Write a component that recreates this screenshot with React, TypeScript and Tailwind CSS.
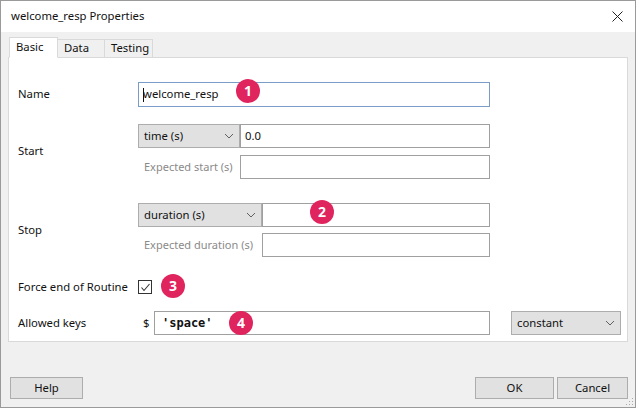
import React from "react";

const font = { fontFamily: '"Noto Sans", "Open Sans", sans-serif' };

function Chevron() {
  return (
    <svg width="10" height="6" viewBox="0 0 10 6" className="shrink-0">
      <polyline points="1,1 5,5 9,1" fill="none" stroke="#606060" strokeWidth="1" />
    </svg>
  );
}

function Badge({ n, className }: { n: string; className: string }) {
  return (
    <div
      className={`absolute w-[24px] h-[24px] rounded-full bg-[#e0245e] text-white flex items-center justify-center text-[14px] font-bold leading-none ${className}`}
    >
      {n}
    </div>
  );
}

function Select({ w, label }: { w: string; label: string }) {
  return (
    <div
      className={`${w} h-[24px] bg-[#e1e1e1] border border-[#adadad] flex items-center justify-between pl-[5px] pr-[5px] text-[11.3px] text-[#111]`}
    >
      <span>{label}</span>
      <Chevron />
    </div>
  );
}

export default function App() {
  return (
    <div className="w-[639px] h-[409px] bg-white" style={font}>
      <div className="w-[636px] h-[408px] border border-[#9a9a9a] flex flex-col bg-[#f0f0f0] relative">
        {/* title bar */}
        <div className="h-[31px] bg-white flex items-center justify-between pl-[10px] pr-[12px] shrink-0">
          <span className="text-[11.3px] text-[#111]">welcome_resp Properties</span>
          <svg width="11" height="11" viewBox="0 0 11 11">
            <line x1="0.5" y1="0.5" x2="10.5" y2="10.5" stroke="#222" strokeWidth="1" />
            <line x1="10.5" y1="0.5" x2="0.5" y2="10.5" stroke="#222" strokeWidth="1" />
          </svg>
        </div>

        {/* body */}
        <div className="flex-1 flex flex-col pl-[7px] pr-[7px]">
          {/* tabs */}
          <div className="flex items-end h-[26px] pl-[1px] relative z-10 mb-[-1px]">
            <div className="w-[49px] h-[21px] bg-white border border-[#d9d9d9] border-b-white text-[11.3px] text-[#111] pl-[6px] flex items-center">
              Basic
            </div>
            <div className="w-[47px] h-[19px] bg-[#f0f0f0] border border-[#d9d9d9] border-l-0 text-[11.3px] text-[#111] pl-[6px] flex items-center">
              Data
            </div>
            <div className="w-[48px] h-[19px] bg-[#f0f0f0] border border-[#d9d9d9] border-l-0 text-[11.3px] text-[#111] pl-[6px] flex items-center">
              Testing
            </div>
          </div>

          {/* panel */}
          <div className="h-[285px] bg-white border border-[#d9d9d9] flex flex-col pl-[9px] text-[11.3px] text-[#111] relative">
            {/* Name */}
            <div className="flex items-center mt-[24px] h-[25px]">
              <div className="w-[120px]">Name</div>
              <div className="relative w-[352px] h-[25px] border border-[#7a9cc6] flex items-center pl-[4px]">
                <span className="w-[1px] h-[14px] bg-[#111] mr-[-1px]" />
                <span>welcome_resp</span>
                <Badge n="1" className="left-[97px] top-[-4px]" />
              </div>
            </div>

            {/* Start */}
            <div className="flex items-center mt-[17px]">
              <div className="w-[120px]">Start</div>
              <div className="flex flex-col gap-[7px]">
                <div className="flex">
                  <Select w="w-[102px]" label="time (s)" />
                  <div className="w-[250px] h-[24px] border border-[#a0a0a0] flex items-center pl-[4px]">0.0</div>
                </div>
                <div className="flex items-center">
                  <div className="w-[102px] pl-[6px] text-[#8a8a8a] text-[11px]">Expected start (s)</div>
                  <div className="w-[250px] h-[24px] border border-[#a0a0a0]" />
                </div>
              </div>
            </div>

            {/* Stop */}
            <div className="flex items-center mt-[24px]">
              <div className="w-[120px]">Stop</div>
              <div className="flex flex-col gap-[6px]">
                <div className="flex relative">
                  <Select w="w-[124px]" label="duration (s)" />
                  <div className="w-[228px] h-[24px] border border-[#a0a0a0]" />
                  <Badge n="2" className="left-[172px] top-[-3px]" />
                </div>
                <div className="flex items-center">
                  <div className="w-[124px] pl-[6px] text-[#8a8a8a] text-[11px]">Expected duration (s)</div>
                  <div className="w-[228px] h-[24px] border border-[#a0a0a0]" />
                </div>
              </div>
            </div>

            {/* Force end */}
            <div className="flex items-center mt-[18px] h-[24px]">
              <div className="w-[120px]">Force end of Routine</div>
              <div className="relative flex items-center">
                <div className="w-[14px] h-[14px] border border-[#333] flex items-center justify-center">
                  <svg width="11" height="11" viewBox="0 0 11 11">
                    <polyline points="1.5,5.5 4,8.5 9.5,2" fill="none" stroke="#333" strokeWidth="1.1" />
                  </svg>
                </div>
                <Badge n="3" className="left-[23px] top-[-6px]" />
              </div>
            </div>

            {/* Allowed keys */}
            <div className="flex items-center mt-[12px] h-[24px]">
              <div className="w-[120px]">Allowed keys</div>
              <div className="w-[16px] pl-[5px]">$</div>
              <div className="relative w-[336px] h-[24px] border border-[#a0a0a0] flex items-center pl-[7px]">
                <span className="font-bold text-[12px]" style={{ fontFamily: '"DejaVu Sans Mono", monospace' }}>
                  'space'
                </span>
                <Badge n="4" className="left-[74px] top-[-1px]" />
              </div>
              <div className="ml-[21px]">
                <Select w="w-[110px]" label="constant" />
              </div>
            </div>
          </div>

          {/* footer */}
          <div className="flex items-center justify-between mt-[35px] pl-[2px]">
            <div className="w-[73px] h-[22px] bg-[#e1e1e1] border border-[#adadad] flex items-center justify-center text-[11.3px] text-[#111]">
              Help
            </div>
            <div className="flex gap-[3px]">
              <div className="w-[79px] h-[22px] bg-[#e1e1e1] border border-[#adadad] flex items-center justify-center text-[11.3px] text-[#111]">
                OK
              </div>
              <div className="w-[71px] h-[22px] bg-[#e1e1e1] border border-[#adadad] flex items-center justify-center text-[11.3px] text-[#111]">
                Cancel
              </div>
            </div>
          </div>
        </div>

        {/* resize grip */}
        <svg width="8" height="8" viewBox="0 0 8 8" className="absolute right-[1px] bottom-[1px]">
          <rect x="6" y="0" width="1" height="1" fill="#aaa" />
          <rect x="3" y="3" width="1" height="1" fill="#aaa" />
          <rect x="6" y="3" width="1" height="1" fill="#aaa" />
          <rect x="0" y="6" width="1" height="1" fill="#aaa" />
          <rect x="3" y="6" width="1" height="1" fill="#aaa" />
          <rect x="6" y="6" width="1" height="1" fill="#aaa" />
        </svg>
      </div>
    </div>
  );
}
